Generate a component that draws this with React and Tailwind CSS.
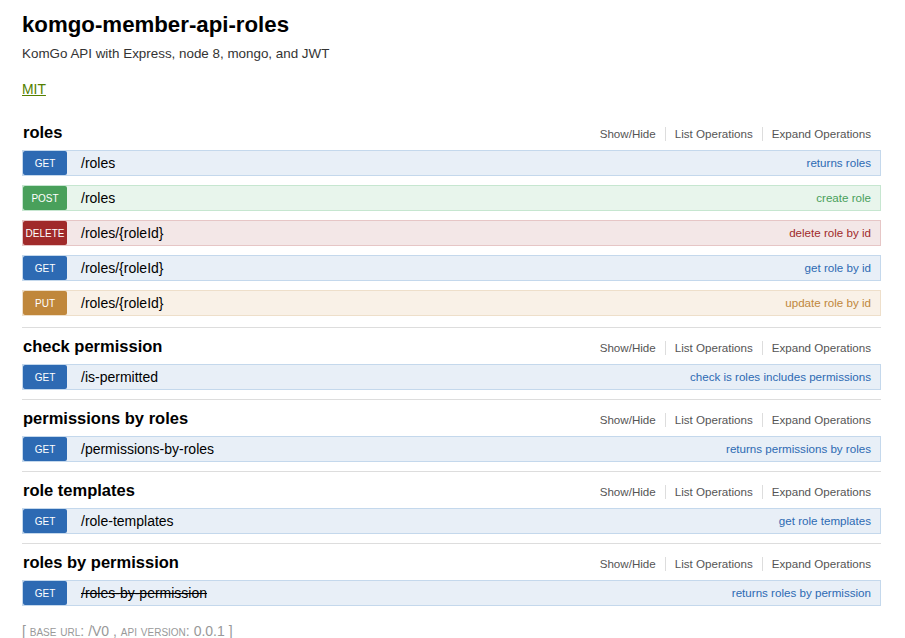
const methodStyles = {
  get: { badge: 'bg-[#2d6ab3]', row: 'bg-[#e8eff7] border-[#c4d8ec]', text: 'text-[#2d6ab3]' },
  post: { badge: 'bg-[#49a05b]', row: 'bg-[#e8f5ec] border-[#c6e6d0]', text: 'text-[#49a05b]' },
  delete: { badge: 'bg-[#a02a2a]', row: 'bg-[#f3e7e7] border-[#e6c6c6]', text: 'text-[#a02a2a]' },
  put: { badge: 'bg-[#c0873b]', row: 'bg-[#f9f1e7] border-[#eedfca]', text: 'text-[#c0873b]' },
}

const sections = [
  {
    name: 'roles',
    ops: [
      { method: 'get', path: '/roles', summary: 'returns roles' },
      { method: 'post', path: '/roles', summary: 'create role' },
      { method: 'delete', path: '/roles/{roleId}', summary: 'delete role by id' },
      { method: 'get', path: '/roles/{roleId}', summary: 'get role by id' },
      { method: 'put', path: '/roles/{roleId}', summary: 'update role by id' },
    ],
  },
  {
    name: 'check permission',
    ops: [{ method: 'get', path: '/is-permitted', summary: 'check is roles includes permissions' }],
  },
  {
    name: 'permissions by roles',
    ops: [{ method: 'get', path: '/permissions-by-roles', summary: 'returns permissions by roles' }],
  },
  {
    name: 'role templates',
    ops: [{ method: 'get', path: '/role-templates', summary: 'get role templates' }],
  },
  {
    name: 'roles by permission',
    ops: [{ method: 'get', path: '/roles-by-permission', summary: 'returns roles by permission', deprecated: true }],
  },
]

function Operation({ op }) {
  const s = methodStyles[op.method]
  return (
    <div className={`flex items-center h-[26px] border ${s.row}`}>
      <span className={`${s.badge} w-[44px] h-[24px] rounded-[2px] flex items-center justify-center text-white text-[10px] uppercase`}>
        {op.method}
      </span>
      <span className={`ml-[14px] text-[14px] text-black ${op.deprecated ? 'line-through' : ''}`}>{op.path}</span>
      <span className={`ml-auto pr-[9px] text-[11.6px] ${s.text}`}>{op.summary}</span>
    </div>
  )
}

function Section({ section, first }) {
  return (
    <div className={first ? 'pb-[11px]' : 'border-t border-[#dddddd] pt-[8px] pb-[9px]'}>
      <div className="flex items-center h-[20px] mb-[8px]">
        <h2 className="text-[16.5px] font-bold text-black pl-[1px]">{section.name}</h2>
        <ul className="ml-auto flex items-center text-[11.6px] text-[#555555] pr-[10px] pt-[3px]">
          <li className="pr-[9px] leading-[14px]">Show/Hide</li>
          <li className="px-[9px] leading-[14px] border-l border-[#dddddd]">List Operations</li>
          <li className="pl-[9px] leading-[14px] border-l border-[#dddddd]">Expand Operations</li>
        </ul>
      </div>
      <div className="flex flex-col gap-[9px]">
        {section.ops.map((op, i) => <Operation key={i} op={op} />)}
      </div>
    </div>
  )
}

export default function App() {
  return (
    <div className="min-h-[638px] bg-white pl-[22px] pt-[10px]" style={{ fontFamily: '"Liberation Sans", Arial, sans-serif' }}>
      <div className="w-[859px]">
        <h1 className="text-[22.25px] font-bold leading-[30px] text-black">komgo-member-api-roles</h1>
        <p className="mt-[6px] text-[13.4px] leading-[16px] text-[#333333]">KomGo API with Express, node 8, mongo, and JWT</p>
        <a href="#" className="inline-block mt-[19px] text-[13.9px] leading-[16px] text-[#547f00] underline">MIT</a>
        <div className="mt-[21px]">
          {sections.map((s, i) => <Section key={s.name} section={s} first={i === 0} />)}
        </div>
        <p className="mt-[8px] text-[14px] leading-[16px] text-[#999999]">
          [ <span className="[font-variant:small-caps]">base url</span>: /V0 , <span className="[font-variant:small-caps]">api version</span>: 0.0.1 ]
        </p>
      </div>
    </div>
  )
}
